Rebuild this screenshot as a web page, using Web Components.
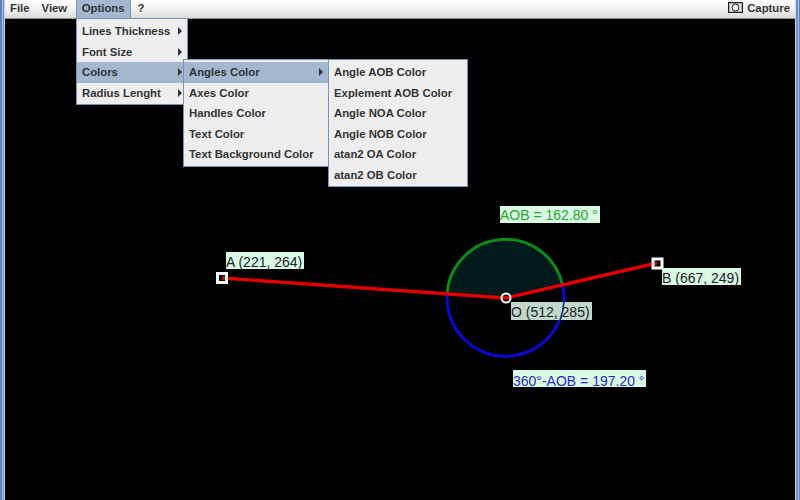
<!DOCTYPE html>
<html>
<head>
<meta charset="utf-8">
<title>Angles</title>
<style>
  html, body { margin: 0; padding: 0; background: #000; overflow: hidden; }
</style>
</head>
<body>
<app-window>
  <menu-bar slot="bar"></menu-bar>
  <angle-canvas></angle-canvas>
  <popup-menu style="left:76px;top:18px;width:112px" items="Lines Thickness>|Font Size>|*Colors>|Radius Lenght>"></popup-menu>
  <popup-menu style="left:183px;top:59px;width:146px" items="*Angles Color>|Axes Color|Handles Color|Text Color|Text Background Color"></popup-menu>
  <popup-menu style="left:328px;top:59px;width:140px" items="Angle AOB Color|Explement AOB Color|Angle NOA Color|Angle NOB Color|atan2 OA Color|atan2 OB Color"></popup-menu>
</app-window>
<script>
class AppWindow extends HTMLElement {
  constructor() {
    super();
    const root = this.attachShadow({ mode: "open" });
    root.innerHTML = `
      <style>
        :host {
          display: flex;
          flex-direction: column;
          position: relative;
          width: 800px;
          height: 500px;
          box-sizing: border-box;
          padding: 0 5px;
          background:
            linear-gradient(90deg, #5f82bb 0 2px, #a9bfe2 2px 3px, #6f90c8 3px 4px, #c8d2e4 4px 5px, transparent 5px) left / 5px 100% no-repeat,
            linear-gradient(90deg, #c8d2e4 0 1px, #6f90c8 1px 3px, #a9bfe2 3px 4px, #5f82bb 4px 5px) right / 5px 100% no-repeat;
          overflow: hidden;
          font: bold 11.35px "Liberation Sans", Arial, sans-serif;
          color: #333;
        }
      </style>
      <slot name="bar"></slot>
      <slot></slot>
    `;
  }
}

class MenuBar extends HTMLElement {
  constructor() {
    super();
    const root = this.attachShadow({ mode: "open" });
    root.innerHTML = `
      <style>
        :host {
          display: flex;
          align-items: stretch;
          flex: none;
          height: 18px;
          background: linear-gradient(#ffffff, #eeeeee 60%, #dadada);
          border-bottom: 1px solid #8c8c8c;
          color: #333;
        }
        span {
          display: flex;
          align-items: center;
          padding: 0 5px 2px;
        }
        .on { background: #a3b8d0; border: 1px solid #7a94b8; border-width: 0 1px; padding: 0 5px 2px 4.5px; margin-left: 4px; }
        .capture { margin-left: auto; gap: 4px; padding: 0 5px 2px 0; }
        svg { display: block; margin-top: -1px; }
      </style>
      <span>File</span>
      <span style="margin-left:2px">View</span>
      <span class="on">Options</span>
      <span style="margin-left:2px">?</span>
      <span class="capture">
        <svg width="15" height="11" viewBox="0 0 15 11">
          <rect x="0.5" y="0.5" width="14" height="10" fill="#eee" stroke="#222"/>
          <rect x="1.5" y="1.5" width="12" height="8" fill="none" stroke="#aaa"/>
          <circle cx="7.5" cy="5.5" r="3.5" fill="#f4f4f4" stroke="#222"/>
        </svg>
        Capture
      </span>
    `;
  }
}

class PopupMenu extends HTMLElement {
  constructor() {
    super();
    const root = this.attachShadow({ mode: "open" });
    const rows = (this.getAttribute("items") || "").split("|").map(text => {
      const on = text.startsWith("*");
      const more = text.endsWith(">");
      const label = text.replace("*", "").replace(">", "");
      return `<div class="row ${on ? "on" : ""}"><span>${label}</span>${more ? '<i></i>' : ""}</div>`;
    }).join("");
    root.innerHTML = `
      <style>
        :host {
          display: block;
          position: absolute;
          box-sizing: border-box;
          padding: 2px 0 1px;
          background: #eeeeee;
          border: 1px solid #7c93b8;
          color: #333;
        }
        .row {
          display: flex;
          align-items: center;
          justify-content: space-between;
          height: 20.5px;
          padding: 0 5px 0 5px;
          white-space: nowrap;
        }
        .on { background: #a3b8d0; }
        i {
          width: 0;
          height: 0;
          border-left: 4px solid #333;
          border-top: 4px solid transparent;
          border-bottom: 4px solid transparent;
        }
      </style>
      ${rows}
    `;
  }
}

class AngleCanvas extends HTMLElement {
  constructor() {
    super();
    const root = this.attachShadow({ mode: "open" });
    root.innerHTML = `
      <style>
        :host {
          display: block;
          flex: 1;
          position: relative;
          background: #000;
        }
        svg { position: absolute; left: -5px; top: -19px; }
        .tag {
          position: absolute;
          font: 14px "Liberation Sans", Arial, sans-serif;
          height: 17px;
          line-height: 20px;
          padding-right: 2px;
          background: #d9fbe6;
          color: #222;
          white-space: nowrap;
        }
      </style>
      <svg width="800" height="500" viewBox="0 0 800 500">
        <path d="M447.1 293.9 A58.5 58.5 0 0 1 562.5 284.8 L505.5 298 Z" fill="#031a1a"/>
        <path d="M447.1 293.9 A58.5 58.5 0 0 1 562.5 284.8" fill="none" stroke="#0f8a1a" stroke-width="3"/>
        <path d="M447.1 293.9 A58.5 58.5 0 1 0 562.5 284.8" fill="none" stroke="#0a0ac8" stroke-width="3.2"/>
        <polyline points="222,278 505.5,298 657,263" fill="none" stroke="#e00000" stroke-width="3.4"/>
        <rect x="217.5" y="273.5" width="9" height="9" fill="none" stroke="#fff" stroke-width="3"/>
        <rect x="653" y="259" width="9" height="9" fill="none" stroke="#fff" stroke-width="3"/>
        <circle cx="506" cy="298" r="4.5" fill="none" stroke="#fff" stroke-width="2"/>
      </svg>
      <div class="tag" style="left:495px;top:187px;line-height:18px;color:#2aa52a">AOB = 162.80 °</div>
      <div class="tag" style="left:221px;top:233px">A (221, 264)</div>
      <div class="tag" style="left:657px;top:249px">B (667, 249)</div>
      <div class="tag" style="left:506px;top:283px;height:18px;background:#c1d9cc">O (512, 285)</div>
      <div class="tag" style="left:508px;top:351px;line-height:22px;color:#2a2ad0">360°-AOB = 197.20 °</div>
      <svg width="800" height="500" viewBox="0 0 800 500">
        <path d="M563.9 302 A58.5 58.5 0 0 1 560.1 320" fill="none" stroke="#14286e" stroke-width="1.6"/>
      </svg>
    `;
  }
}

customElements.define("app-window", AppWindow);
customElements.define("menu-bar", MenuBar);
customElements.define("popup-menu", PopupMenu);
customElements.define("angle-canvas", AngleCanvas);
</script>
</body>
</html>
